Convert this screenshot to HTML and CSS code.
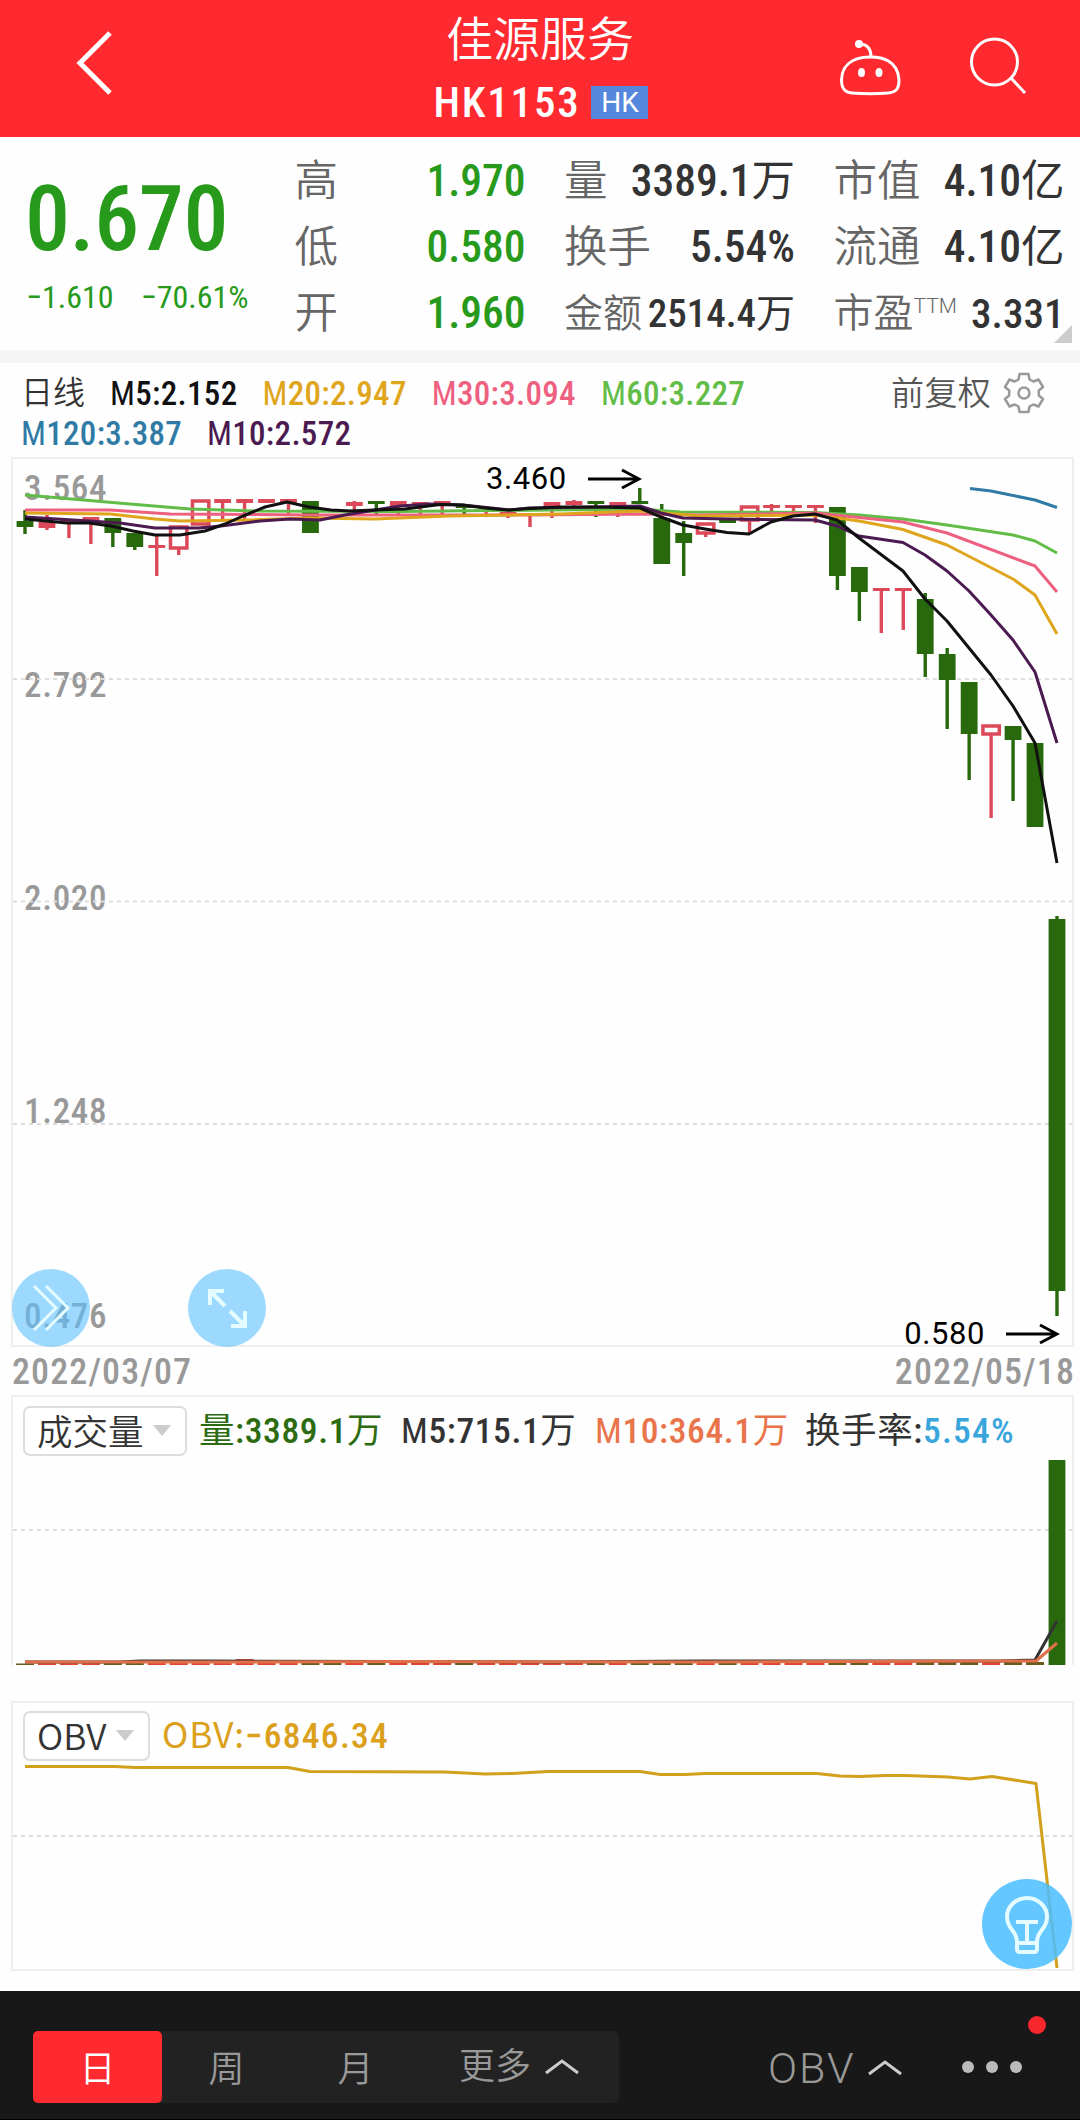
FILE: index.html
```html
<!DOCTYPE html>
<html lang="zh-CN">
<head>
    <meta charset="utf-8">
    <title>佳源服务 HK1153</title>
    <link rel="stylesheet" href="styles.css">
</head>
<body>
    <div class="app">
        <!-- Header -->
        <header class="header">
            <svg class="back-icon" viewBox="0 0 44 72" width="44" height="72">
                <path d="M38 6 L8 36 L38 66"/>
            </svg>
            <div class="title">
                <div class="stock-name">佳源服务</div>
                <div class="stock-code">HK1153 <span class="market-tag">HK</span></div>
            </div>
            <div class="header-icons">
                <svg class="line-icon" viewBox="0 0 64 60" width="64" height="60">
                    <path d="M33 20 C22 20 4 23 3.500 43 C3.500 53 8 55.500 14 56 C26 57 39 57 50 56 C57 55.500 61 53 61 43 C60 23 43 20 33 20 Z"/>
                    <path d="M21 7 C30 7 33 12 33 20"/>
                    <circle class="solid" cx="21" cy="7" r="2.500"/>
                    <ellipse class="solid" cx="23.500" cy="35.500" rx="2" ry="3"/>
                    <ellipse class="solid" cx="41" cy="35.500" rx="2" ry="3"/>
                </svg>
                <svg class="line-icon" viewBox="0 0 60 60" width="60" height="60">
                    <circle cx="26.500" cy="25" r="23"/>
                    <path d="M43 41 L57 56"/>
                </svg>
            </div>
        </header>

        <!-- Quote -->
        <section class="quote">
            <div class="price-box">
                <div class="price">0.670</div>
                <div class="change"><span>−1.610</span><span>−70.61%</span></div>
            </div>
            <div class="stats">
                <div class="stat down"><label>高</label><b>1.970</b></div>
                <div class="stat down"><label>低</label><b>0.580</b></div>
                <div class="stat down"><label>开</label><b>1.960</b></div>
            </div>
            <div class="stats">
                <div class="stat"><label>量</label><b>3389.1<i>万</i></b></div>
                <div class="stat"><label>换手</label><b>5.54%</b></div>
                <div class="stat small"><label>金额</label><b>2514.4<i>万</i></b></div>
            </div>
            <div class="stats">
                <div class="stat"><label>市值</label><b>4.10<i>亿</i></b></div>
                <div class="stat"><label>流通</label><b>4.10<i>亿</i></b></div>
                <div class="stat pe"><label>市盈<sup>TTM</sup></label><b>3.331</b></div>
            </div>
            <span class="corner"></span>
        </section>

        <!-- Moving averages -->
        <section class="ma-legend">
            <div class="ma-row">
                <span class="period">日线</span>
                <span class="m5"><i>M</i>5:2.152</span>
                <span class="m20"><i>M</i>20:2.947</span>
                <span class="m30"><i>M</i>30:3.094</span>
                <span class="m60"><i>M</i>60:3.227</span>
                <span class="adjust">前复权</span>
                <svg class="gear" viewBox="-21 -21 42 42" width="42" height="42">
                    <path d="M-4.500 -19 H4.500 L5.500 -13.500 L9.500 -11.500 L14.500 -13.500 L19 -6 L14.800 -2.500 V2.500 L19 6 L14.500 13.500 L9.500 11.500 L5.500 13.500 L4.500 19 H-4.500 L-5.500 13.500 L-9.500 11.500 L-14.500 13.500 L-19 6 L-14.800 2.500 V-2.500 L-19 -6 L-14.500 -13.500 L-9.500 -11.500 L-5.500 -13.500 Z"/>
                    <circle r="5.500"/>
                </svg>
            </div>
            <div class="ma-row">
                <span class="m120"><i>M</i>120:3.387</span>
                <span class="m10"><i>M</i>10:2.572</span>
            </div>
        </section>

        <!-- Candles -->
        <section class="panel k-panel">
            <div class="scale">
                <span>3.564</span><span>2.792</span><span>2.020</span><span>1.248</span><span>0.476</span>
            </div>
            <svg class="plot" id="kChart" viewBox="12 457 1061 890" width="1061" height="890"></svg>
            <div class="mark high">3.460 <svg viewBox="0 0 54 22" width="54" height="22"><path d="M0 11 H51 M34 2 L51 11 L34 20"/></svg></div>
            <div class="mark low">0.580 <svg viewBox="0 0 54 22" width="54" height="22"><path d="M0 11 H51 M34 2 L51 11 L34 20"/></svg></div>
            <div class="fab fab-skip">
                <svg viewBox="0 0 78 78" width="78" height="78"><path d="M22 17 L44 39 L22 61 M34 17 L56 39 L34 61"/></svg>
            </div>
            <div class="fab fab-expand">
                <svg viewBox="0 0 78 78" width="78" height="78"><path class="bold" d="M22 36 V22 H36 M22 22 L37 37 M42 42 L57 57 M43 57 H57 V42"/></svg>
            </div>
        </section>
        <div class="dates"><span>2022/03/07</span><span>2022/05/18</span></div>

        <!-- Volume -->
        <section class="panel vol-panel">
            <div class="panel-head">
                <button type="button" class="select">成交量<span class="arrow"></span></button>
                <span class="vol"><i>量</i>:3389.1<i>万</i></span>
                <span class="vm5"><i>M</i>5:715.1<i>万</i></span>
                <span class="vm10"><i>M</i>10:364.1<i>万</i></span>
                <span class="rate"><i>换手率</i>:<em>5.54%</em></span>
            </div>
            <svg class="plot" id="volChart" viewBox="12 1395 1061 272" width="1061" height="272"></svg>
        </section>

        <!-- OBV -->
        <section class="panel obv-panel">
            <div class="panel-head">
                <button type="button" class="select obv-select">OBV<span class="arrow"></span></button>
                <span class="obv"><i>OBV:</i>−6846.34</span>
            </div>
            <svg class="plot" id="obvChart" viewBox="12 1701 1061 270" width="1061" height="270"></svg>
            <div class="fab fab-tip">
                <svg viewBox="0 0 90 90" width="90" height="90"><path d="M35 63 C35 51 25 51 25 38 A20 19 0 0 1 65 38 C65 51 55 51 55 63 V70 Q55 73 52 73 H38 Q35 73 35 70 Z M35 64 H55 M34 43 H56 M45 43 V63"/></svg>
            </div>
        </section>

        <!-- Bottom bar -->
        <nav class="bottom-bar">
            <div class="tabs">
                <span class="tab active">日</span>
                <span class="tab">周</span>
                <span class="tab">月</span>
                <span class="tab more">更多 <svg class="caret" viewBox="0 0 36 18" width="36" height="18"><path d="M2 15 L18 3 L34 15"/></svg></span>
            </div>
            <div class="indicator">OBV <svg class="caret" viewBox="0 0 36 18" width="36" height="18"><path d="M2 15 L18 3 L34 15"/></svg></div>
            <div class="dots"><i></i><i></i><i></i><b class="red-dot"></b></div>
        </nav>
    </div>

    <script src="chart.js"></script>
</body>
</html>
```
FILE: styles.css
```css
* {
    box-sizing: border-box;
}

body {
    margin: 0;
    background: #fefefe;
    font-family: "Roboto Condensed", "Noto Sans CJK SC", sans-serif;
    color: #333;
}

.app {
    width: 1080px;
    height: 2120px;
    display: flex;
    flex-direction: column;
    overflow: hidden;
}

svg {
    display: block;
    fill: none;
}

i, em {
    font-style: normal;
}

/* lighter glyphs inside the numbers */
b i, span i {
    font-weight: 380;
}

/* header */
.header {
    height: 137px;
    background: #ff2a2f;
    color: #fff;
    display: grid;
    grid-template-columns: 300px 1fr 300px;
    padding-top: 12px;
}

.back-icon {
    margin: 15px 0 0 72px;
    stroke: #fff;
    stroke-width: 5;
}

.title {
    text-align: center;
}

.stock-name {
    font-size: 47px;
    line-height: 56px;
    font-weight: 350;
}

.stock-code {
    display: flex;
    justify-content: center;
    align-items: center;
    gap: 11px;
    margin-top: 9px;
    padding-left: 2px;
    font-size: 43px;
    font-weight: 460;
    line-height: 50px;
    letter-spacing: 1.8px;
}

.market-tag {
    width: 57px;
    height: 33px;
    background: #5587dc;
    font-family: Roboto, sans-serif;
    font-size: 28px;
    font-weight: 400;
    line-height: 33px;
    letter-spacing: 0;
}

.header-icons {
    display: flex;
    gap: 66px;
    padding: 25px 0 0 58px;
}

.line-icon {
    stroke: #fff;
    stroke-width: 3;
}

.line-icon .solid {
    fill: #fff;
}

/* quote */
.quote {
    position: relative;
    height: 226px;
    display: grid;
    grid-template-columns: 230px 231px 231px 231px;
    column-gap: 38.5px;
    padding-left: 26px;
    border-bottom: 13px solid #f5f5f5;
}

.price-box {
    color: #279a1b;
    padding-top: 38px;
}

.price {
    margin-left: -1px;
    font-size: 90px;
    font-weight: 500;
    line-height: 90px;
    letter-spacing: -0.4px;
}

.change {
    display: flex;
    gap: 27px;
    margin-top: 12px;
    font-size: 32px;
    font-weight: 450;
    line-height: 40px;
    white-space: nowrap;
}

.stats {
    padding-top: 12px;
}

.stat {
    display: flex;
    justify-content: space-between;
    height: 66px;
    font-size: 43.5px;
    line-height: 66px;
    white-space: nowrap;
}

.stat label {
    color: #666;
    font-weight: 350;
}

.stat b {
    font-weight: 480;
}

.stat.down b {
    color: #279a1b;
}

.stat.small {
    font-size: 39px;
}

.stat.pe {
    font-size: 41px;
}

.stat.pe label {
    font-size: 40px;
}

.stat sup {
    font-family: Roboto, sans-serif;
    font-size: 21px;
    font-weight: 300;
    line-height: 0;
    vertical-align: 14px;
}

.corner {
    position: absolute;
    right: 8px;
    bottom: 7px;
    border-left: 18px solid transparent;
    border-bottom: 18px solid #ccc;
}

/* moving averages */
.ma-legend {
    height: 94px;
    padding: 10px 0 0 21px;
    font-size: 33px;
    font-weight: 480;
}

.ma-row {
    display: flex;
    align-items: center;
    gap: 25px;
    height: 40px;
    line-height: 41px;
    letter-spacing: 0.3px;
}

.period {
    font-size: 32px;
    font-weight: 350;
    letter-spacing: 0;
}

.adjust {
    margin-left: auto;
    font-weight: 350;
    color: #555;
}

.gear {
    margin: 0 35px 0 -13px;
    stroke: #999;
    stroke-width: 2.5;
    stroke-linejoin: round;
}

.m5 { color: #111; }
.m10 { color: #4a1a50; }
.m20 { color: #dfa51c; }
.m30 { color: #ee6080; }
.m60 { color: #62bd48; }
.m120 { color: #2f7ba5; }

/* panels */
.panel {
    position: relative;
    margin: 0 6px 0 11px;
    border: 2px solid #eee;
}

.plot {
    position: absolute;
    left: -1px;
    top: -2px;
}

.k-panel {
    height: 890px;
}

.scale {
    display: grid;
    grid-template-rows: 197px 213px 213px 205px 44px;
    padding: 8px 0 0 11px;
    color: #999;
    font-size: 35px;
    font-weight: 480;
    line-height: 44px;
    letter-spacing: 0.7px;
}

.mark {
    position: absolute;
    display: flex;
    align-items: center;
    gap: 21px;
    font-family: Roboto, sans-serif;
    font-size: 31px;
    line-height: 30px;
    letter-spacing: 0.6px;
    color: #000;
}

.mark svg {
    stroke: #000;
    stroke-width: 3;
}

.mark.high {
    left: 473px;
    top: 5px;
}

.mark.low {
    right: 12px;
    bottom: -4px;
}

.fab {
    position: absolute;
    width: 78px;
    height: 78px;
    border-radius: 50%;
    background: rgba(92, 192, 255, 0.6);
}

.fab svg {
    stroke: #e4fbff;
    stroke-width: 3;
}

.fab .bold {
    stroke-width: 4;
}

.fab-skip {
    left: -1px;
    bottom: -2px;
}

.fab-expand {
    left: 175px;
    bottom: -2px;
}

.fab-tip {
    right: 0;
    bottom: 0;
    width: 90px;
    height: 90px;
    background: rgba(76, 190, 255, 0.86);
}

.fab-tip svg {
    stroke-width: 4;
}

.dates {
    display: flex;
    justify-content: space-between;
    height: 48px;
    padding: 0 5px 0 12px;
    font-size: 36px;
    font-weight: 470;
    line-height: 50px;
    letter-spacing: 1.1px;
    color: #999;
}

.vol-panel {
    height: 270px;
    border-bottom: none;
}

.obv-panel {
    height: 270px;
    margin-top: 36px;
}

.panel-head {
    display: flex;
    align-items: center;
    padding: 9px 0 0 10px;
    font-size: 35.5px;
    font-weight: 480;
    line-height: 49px;
    letter-spacing: 0.6px;
    white-space: nowrap;
}

.select {
    display: flex;
    align-items: center;
    justify-content: space-between;
    width: 164px;
    height: 50px;
    padding: 0 14px 2px 12px;
    border: 2px solid #ddd;
    border-radius: 7px;
    background: #fff;
    color: #333;
    font: 350 35.5px/44px "Noto Sans CJK SC", sans-serif;
}

.arrow {
    border: 9px solid transparent;
    border-top: 11px solid #ccc;
    border-bottom: none;
}

.obv-select {
    width: 127px;
}

.vol {
    margin-left: 12px;
    width: 202px;
    color: #2c6b10;
}

.vm5 { width: 194px; }

.vm10 {
    width: 210px;
    color: #e9744a;
}

.rate em {
    color: #38a5dc;
    letter-spacing: 1.2px;
}

.obv-panel .panel-head {
    height: 57px;
}

.obv {
    margin-left: 12px;
    color: #dba01c;
    letter-spacing: 1.3px;
}

.obv i {
    font-family: "Noto Sans CJK SC", sans-serif;
    letter-spacing: 0.8px;
    line-height: 0;
}

/* bottom bar */
.bottom-bar {
    position: relative;
    height: 129px;
    margin-top: 20px;
    display: flex;
    align-items: flex-start;
    padding: 40px 0 0 33px;
    background: #181818;
    border-bottom: 1px solid #000;
    color: #999;
    font-weight: 350;
    flex: none;
}

.tabs {
    display: flex;
    width: 586px;
    background: #222;
    border-radius: 6px;
}

.tab {
    width: 129px;
    height: 72px;
    border-radius: 5px;
    font-size: 36px;
    line-height: 78px;
    text-align: center;
}

.tab.active {
    background: #ff2a2f;
    color: #fff;
}

.tab.more {
    display: flex;
    align-items: center;
    gap: 13px;
    width: 199px;
    padding-left: 39px;
}

.caret {
    stroke: #ccc;
    stroke-width: 3;
}

.indicator {
    display: flex;
    align-items: center;
    gap: 11px;
    margin-left: 149px;
    height: 74px;
    font-family: Roboto, sans-serif;
    font-size: 43px;
    font-weight: 300;
    letter-spacing: 2px;
}

.dots {
    position: relative;
    display: flex;
    gap: 12px;
    margin-left: 59px;
    padding-top: 30px;
}

.dots i {
    width: 12px;
    height: 12px;
    border-radius: 50%;
    background: #bbb;
}

.red-dot {
    position: absolute;
    right: -24px;
    top: -15px;
    width: 18px;
    height: 18px;
    border-radius: 50%;
    background: #f8262d;
}
```
FILE: chart.js
```js
const GREEN = '#27690c';
const RED = '#dc4a5a';
const STEP = 21.957;
const START = 25;

// [type, body top, body bottom, wick top, wick bottom]
// g = down, r = filled up, h = hollow up
const candles = [
    ['g', 521, 527, 510, 534], ['r', 522, 528, 515, 530], ['r', 520, 523, 520, 538],
    ['r', 517, 523, 517, 544], ['g', 518, 533, 518, 547], ['g', 533, 547, 533, 550],
    ['r', 545, 548, 536, 576], ['h', 527, 548, 548, 555], ['h', 501, 524, 524, 524],
    ['r', 499, 503, 501, 520], ['r', 499, 503, 501, 519], ['r', 499, 503, 501, 503],
    ['r', 499, 503, 501, 516], ['g', 501, 533, 501, 533], null,
    ['r', 502, 506, 501, 511], ['g', 501, 504, 501, 514], ['r', 501, 506, 501, 514],
    ['r', 502, 506, 502, 514], ['r', 501, 505, 501, 514], ['g', 506, 508, 506, 514],
    ['r', 510, 512, 510, 517], ['r', 512, 514, 512, 518], ['r', 513, 516, 513, 527],
    ['r', 502, 507, 502, 518], ['r', 501, 505, 500, 508], ['g', 501, 504, 501, 517],
    ['r', 502, 506, 502, 517], ['g', 501, 504, 488, 504], ['g', 518, 564, 504, 564],
    ['g', 533, 543, 521, 576], ['h', 524, 533, 533, 537], ['g', 520, 523, 519, 523],
    ['h', 507, 520, 520, 533], ['r', 505, 508, 504, 517], ['r', 505, 508, 505, 517],
    ['r', 505, 508, 505, 523], ['g', 507, 576, 507, 590], ['g', 567, 592, 567, 621],
    ['r', 588, 591, 588, 633], ['r', 588, 591, 588, 630], ['g', 599, 654, 593, 677],
    ['g', 654, 680, 648, 729], ['g', 682, 734, 682, 780], ['h', 726, 734, 734, 818],
    ['g', 726, 740, 726, 801], ['g', 743, 827, 743, 827], ['g', 919, 1291, 916, 1316]
];

const averages = [
    ['#62bd48', '25,495 60,498 130,504 190,509 260,511 400,511.500 640,509 680,512 815,512.500 859,515 903,519 947,525 1013,535 1035,541 1057,553'],
    ['#ee6080', '25,510 110,510 170,514 309,515 529,515 640,514 700,515 815,513 903,522 947,533 1035,566 1057,592'],
    ['#dfa51c', '25,513 110,514 155,519 180,521 250,520 309,518 375,519 450,516 560,514 640,511 700,516 815,515 837,518 859,521 903,529.500 947,545 1013,579 1035,595 1057,634'],
    ['#4a1a50', '25,517 89,521 120,523 155,528 199,528 221,526 260,521 290,519 320,520 345,515 375,510 400,506 430,504 463,505 510,510 529,508 600,507 640,506 661,513 683,518 727,519 815,520 837,526 859,536 903,542.500 925,555 947,571 969,591 991,615 1013,640 1035,672 1057,743'],
    ['#111111', '25,519 67,523 89,523 111,526 133,531 155,535 180,535 205,531 225,524 243,516 265,507 287,502 309,507 331,510 350,511 375,510 405,509 440,504.500 462,505 485,508 507,510 529,508.500 560,507 600,507 640,508 661,517 683,525 705,529 727,532.500 749,534 771,522 793,516 815,514 837,520 859,538 903,571 925,599 947,621 969,648 991,675 1013,706 1035,743 1057,863'],
    ['#2f7ba5', '970,488.500 991,491 1035,500 1057,507.500']
];

function rect(x, y, w, h, attrs) {
    return `<rect x="${x}" y="${y}" width="${w}" height="${h}" ${attrs}/>`;
}

function line(points, color) {
    return `<polyline points="${points}" stroke="${color}" stroke-width="3" stroke-linejoin="round" fill="none"/>`;
}

function grid(y) {
    return `<path d="M13 ${y} H1072" stroke="#ddd" stroke-width="2" stroke-dasharray="4 4"/>`;
}

function drawCandles() {
    let out = grid(679) + grid(901.5) + grid(1124);
    candles.forEach((c, i) => {
        if (!c) return;
        const x = START + i * STEP;
        const color = c[0] === 'g' ? GREEN : RED;
        out += rect(x - 1.7, c[3], 3.4, c[4] - c[3], `fill="${color}"`);
        if (c[0] === 'h') {
            out += rect(x - 8.2, c[1], 16.4, c[2] - c[1], `fill="#fff" stroke="${color}" stroke-width="3.500"`);
        } else {
            out += rect(x - 8.4, c[1], 16.8, c[2] - c[1], `fill="${color}"`);
        }
    });
    averages.forEach(a => out += line(a[1], a[0]));
    document.getElementById('kChart').innerHTML = out;
}

function drawVolume() {
    let out = grid(1530);
    for (let i = 0; i < candles.length - 1; i++) {
        const x = START + i * STEP;
        const up = candles[i] && candles[i][0] !== 'g';
        const top = i === 0 ? 1663.5 : i === 10 ? 1659 : 1662;
        out += rect(x - 9, top, 18, 1665 - top, `fill="${up ? '#e3442f' : '#6b5a1c'}"`);
    }
    out += rect(START + 47 * STEP - 8.4, 1460, 16.8, 205, `fill="${GREEN}"`);
    out += line('25,1662 120,1662 140,1661 210,1661 560,1662 700,1661 1000,1661 1035,1660 1057,1621', '#333');
    out += line('25,1662 230,1662 400,1661.500 700,1662 1036,1661 1057,1643', '#df7048');
    document.getElementById('volChart').innerHTML = out;
}

function drawObv() {
    document.getElementById('obvChart').innerHTML = grid(1836) +
        line('25,1766.500 115,1766.500 135,1767.500 288,1767.500 310,1771.500 445,1772 485,1774 512,1773.500 548,1771.500 640,1771.500 660,1774.500 685,1774.500 705,1773.500 817,1773.500 840,1776 860,1776.500 885,1775.500 905,1775.500 948,1777 970,1779 992,1776.500 1036,1783.500 1057,1968', '#d3a01c');
}

drawCandles();
drawVolume();
drawObv();
```
